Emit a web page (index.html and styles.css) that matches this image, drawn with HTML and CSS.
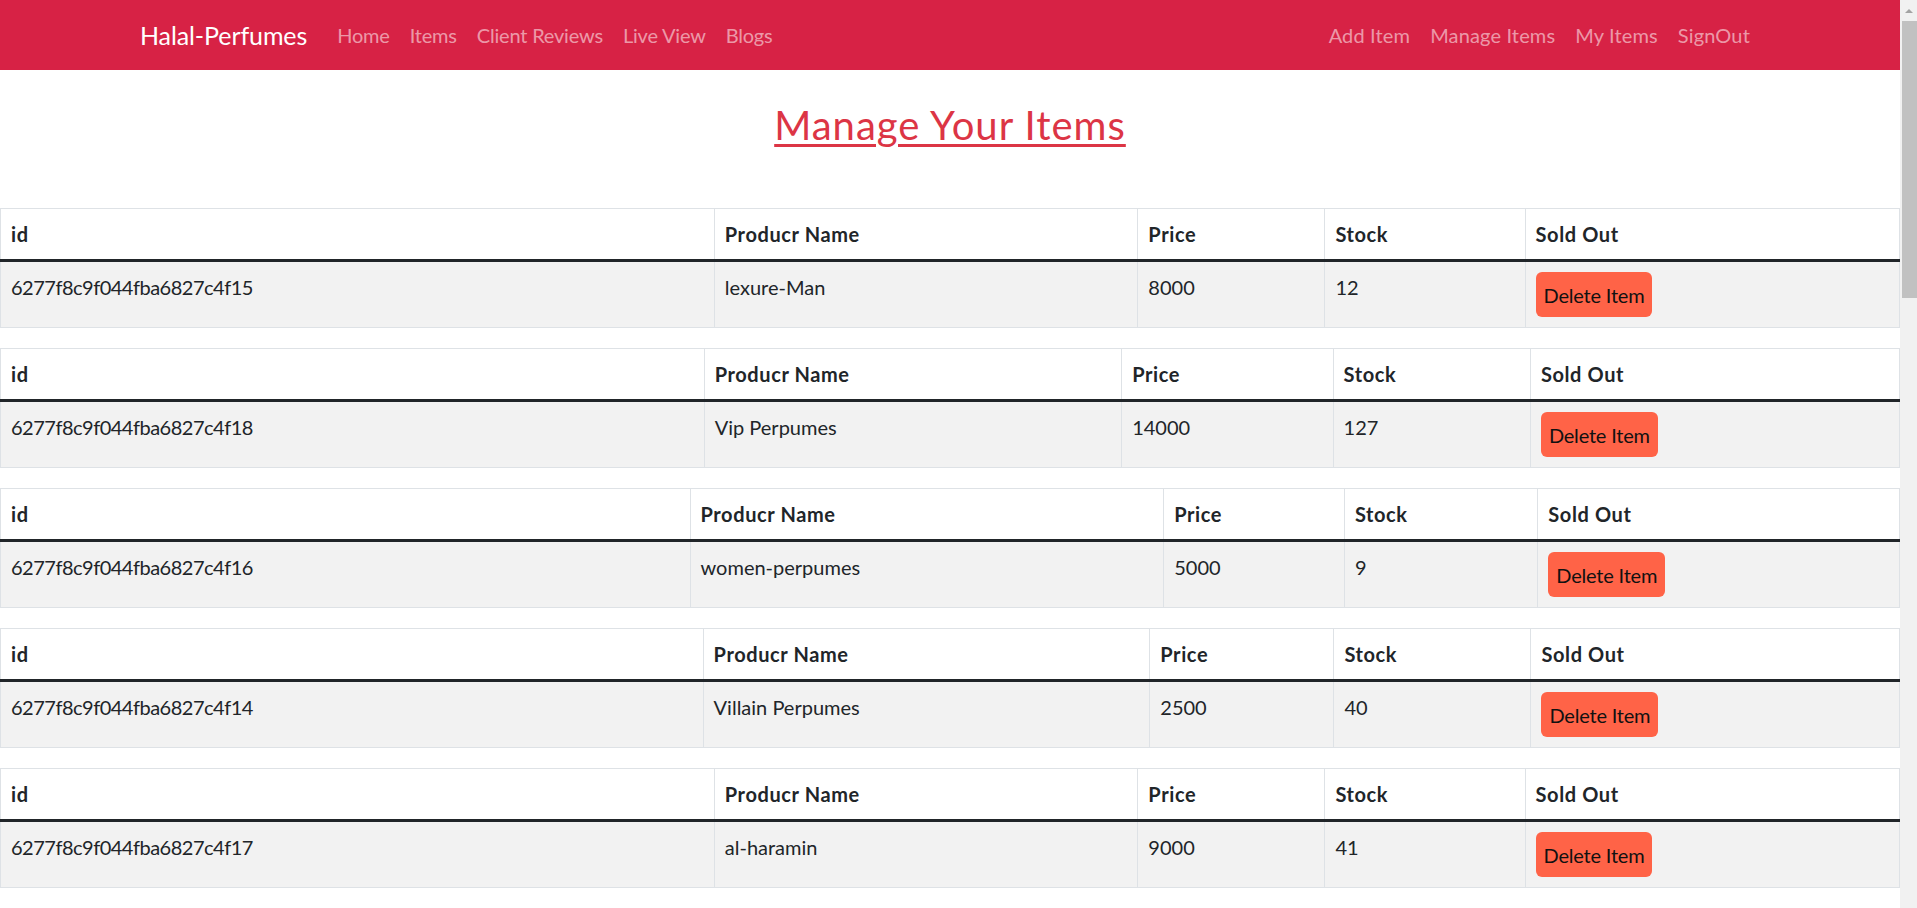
FILE: index.html
```html
<!DOCTYPE html>
<html lang="en">
<head>
<meta charset="utf-8">
<title>Halal-Perfumes - Manage Items</title>
<link rel="stylesheet" href="styles.css">
</head>
<body>
<div class="page">
  <div class="main">
    <nav class="navbar">
      <div class="container">
        <a class="brand" href="#">Halal-Perfumes</a>
        <ul class="nav-left">
          <li><a href="#">Home</a></li>
          <li><a href="#">Items</a></li>
          <li><a href="#">Client Reviews</a></li>
          <li><a href="#">Live View</a></li>
          <li><a href="#">Blogs</a></li>
        </ul>
        <ul class="nav-right">
          <li><a href="#">Add Item</a></li>
          <li><a href="#">Manage Items</a></li>
          <li><a href="#">My Items</a></li>
          <li><a href="#">SignOut</a></li>
        </ul>
      </div>
    </nav>

    <h2 class="page-title">Manage Your Items</h2>

    <table class="item-table">
      <thead><tr><th>id</th><th>Producr Name</th><th>Price</th><th>Stock</th><th>Sold Out</th></tr></thead>
      <tbody><tr><td>6277f8c9f044fba6827c4f15</td><td>lexure-Man</td><td>8000</td><td>12</td><td><button class="btn-delete">Delete Item</button></td></tr></tbody>
    </table>

    <table class="item-table">
      <thead><tr><th>id</th><th>Producr Name</th><th>Price</th><th>Stock</th><th>Sold Out</th></tr></thead>
      <tbody><tr><td>6277f8c9f044fba6827c4f18</td><td>Vip Perpumes</td><td>14000</td><td>127</td><td><button class="btn-delete">Delete Item</button></td></tr></tbody>
    </table>

    <table class="item-table">
      <thead><tr><th>id</th><th>Producr Name</th><th>Price</th><th>Stock</th><th>Sold Out</th></tr></thead>
      <tbody><tr><td>6277f8c9f044fba6827c4f16</td><td>women-perpumes</td><td>5000</td><td>9</td><td><button class="btn-delete">Delete Item</button></td></tr></tbody>
    </table>

    <table class="item-table">
      <thead><tr><th>id</th><th>Producr Name</th><th>Price</th><th>Stock</th><th>Sold Out</th></tr></thead>
      <tbody><tr><td>6277f8c9f044fba6827c4f14</td><td>Villain Perpumes</td><td>2500</td><td>40</td><td><button class="btn-delete">Delete Item</button></td></tr></tbody>
    </table>

    <table class="item-table">
      <thead><tr><th>id</th><th>Producr Name</th><th>Price</th><th>Stock</th><th>Sold Out</th></tr></thead>
      <tbody><tr><td>6277f8c9f044fba6827c4f17</td><td>al-haramin</td><td>9000</td><td>41</td><td><button class="btn-delete">Delete Item</button></td></tr></tbody>
    </table>
  </div>
  <div class="scrollbar">
    <div class="sb-arrow"></div>
    <div class="sb-thumb"></div>
  </div>
</div>
</body>
</html>
```

FILE: styles.css
```css
* { box-sizing: border-box; }

html, body {
  margin: 0;
  padding: 0;
}

body {
  font-family: Lato, "Open Sans", "Liberation Sans", sans-serif;
  font-size: 20px;
  line-height: 30px;
  color: #212529;
  background: #fff;
}

.page {
  display: flex;
  height: 100vh;
  overflow: hidden;
}

.main {
  flex: 1;
  min-width: 0;
  overflow: hidden;
}

/* navbar */
.navbar {
  background: #d72245;
  height: 70px;
  display: flex;
  align-items: center;
}

.container {
  width: 100%;
  max-width: 1650px;
  margin: 0 auto;
  padding: 0 15px;
  display: flex;
  align-items: center;
}

.brand {
  font-size: 25px;
  line-height: 37px;
  color: #fff;
  text-decoration: none;
  margin-right: 20px;
  letter-spacing: -0.1px;
}

.nav-left, .nav-right {
  list-style: none;
  margin: 0;
  padding: 0;
  display: flex;
}

.nav-right { margin-left: auto; }

.nav-left a, .nav-right a {
  display: block;
  padding: 0 10px;
  line-height: 30px;
  color: rgba(255, 255, 255, 0.55);
  text-decoration: none;
  letter-spacing: -0.2px;
}

.nav-right a {
  letter-spacing: 0.15px;
}

/* title */
.page-title {
  margin: 0;
  padding: 31px 0 0;
  margin-bottom: 59px;
  text-align: center;
  font-size: 40px;
  line-height: 48px;
  font-weight: 400;
  letter-spacing: 1px;
  color: #dc3545;
  text-decoration: underline;
  text-decoration-thickness: 3px;
  text-underline-offset: 4px;
}

/* tables */
.item-table {
  width: 100%;
  border-collapse: collapse;
  margin-bottom: 20px;
  vertical-align: top;
}

.item-table th,
.item-table td {
  border: 1px solid #dee2e6;
  padding: 10px;
  text-align: left;
  vertical-align: top;
  line-height: 30px;
}

.item-table th {
  font-weight: 700;
  color: #212529;
  letter-spacing: 0.6px;
}

.item-table td:first-child {
  letter-spacing: -0.5px;
}

.item-table thead th {
  border-bottom: 3px solid #212529;
}

.item-table tbody td {
  background: #f2f2f2;
}

.btn-delete {
  font-family: inherit;
  font-size: 20px;
  line-height: 30px;
  padding: 7.5px 8px;
  border: 0;
  border-radius: 6px;
  background: #ff6347;
  color: #111;
  cursor: pointer;
  letter-spacing: -0.2px;
}

/* fake page scrollbar */
.scrollbar {
  width: 17px;
  flex: 0 0 17px;
  background: #f1f1f1;
}

.sb-arrow {
  width: 0;
  height: 0;
  margin: 9px auto 0;
  border-left: 4px solid transparent;
  border-right: 4px solid transparent;
  border-bottom: 4px solid #a3a3a3;
}

.sb-thumb {
  margin: 8px 0 0 2px;
  width: 15px;
  height: 277px;
  background: #c1c1c1;
}
```
